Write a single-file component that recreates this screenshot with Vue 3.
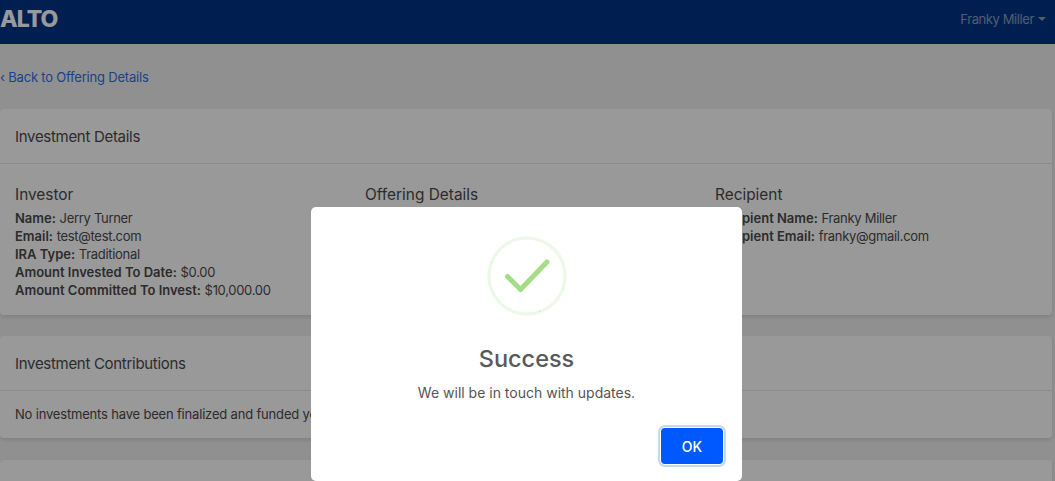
<script setup>
const columns = [
  {
    title: 'Investor',
    rows: [
      ['Name:', 'Jerry Turner'],
      ['Email:', 'test@test.com'],
      ['IRA Type:', 'Traditional'],
      ['Amount Invested To Date:', '$0.00'],
      ['Amount Committed To Invest:', '$10,000.00']
    ]
  },
  { title: 'Offering Details', rows: [] },
  {
    title: 'Recipient',
    rows: [
      ['Recipient Name:', 'Franky Miller'],
      ['Recipient Email:', 'franky@gmail.com']
    ]
  }
]
</script>

<template>
  <div class="page">
    <header class="navbar">
      <span class="logo">ALTO</span>
      <span class="user">Franky Miller<i class="caret"></i></span>
    </header>

    <main class="content">
      <a class="back" href="#">‹ Back to Offering Details</a>

      <section class="card">
        <h2 class="card-header">Investment Details</h2>
        <div class="details">
          <div v-for="col in columns" :key="col.title" class="col">
            <h3>{{ col.title }}</h3>
            <p v-for="row in col.rows" :key="row[0]"><b>{{ row[0] }}</b> <span>{{ row[1] }}</span></p>
          </div>
        </div>
      </section>

      <section class="card">
        <h2 class="card-header">Investment Contributions</h2>
        <p class="empty">No investments have been finalized and funded yet.</p>
      </section>

      <section class="card last"></section>
    </main>

    <div class="overlay">
      <div class="modal">
        <svg class="check" width="80" height="80" viewBox="0 0 80 80">
          <circle cx="40" cy="40" r="38" fill="none" stroke="#edf8e8" stroke-width="3.2" />
          <path d="M4 25.5 L5.5 27 M52 74 L53.5 76" fill="none" stroke="#c4e8b0" stroke-width="0.8" />
          <path d="M20.5 40.5 L33.5 53.5 L60 26" fill="none" stroke="#a5dc86" stroke-width="5" stroke-linecap="round" stroke-linejoin="round" />
        </svg>
        <h1>Success</h1>
        <p class="message">We will be in touch with updates.</p>
        <div class="actions">
          <button class="ok">OK</button>
        </div>
      </div>
    </div>
  </div>
</template>

<style>
html, body {
  margin: 0;
  height: 100%;
  overflow: hidden;
}
</style>

<style scoped>
.page {
  position: relative;
  height: 481px;
  overflow: hidden;
  background: #f0f1f0;
  font-family: Inter, "Liberation Sans", sans-serif;
  color: #4a4a4a;
}

.navbar {
  height: 44px;
  background: #003488;
  display: flex;
  align-items: center;
  justify-content: space-between;
  padding-bottom: 6px;
  box-sizing: border-box;
}

.logo {
  font-size: 23px;
  font-weight: 800;
  color: #fff;
  letter-spacing: -1px;
  line-height: 40px;
}

.user {
  font-size: 13px;
  letter-spacing: -0.4px;
  color: #8d9cb8;
  padding-right: 9px;
  display: flex;
  align-items: center;
}

.caret {
  width: 0;
  height: 0;
  margin-left: 4px;
  border-left: 4px solid transparent;
  border-right: 4px solid transparent;
  border-top: 4px solid #8d9cb8;
}

.content {
  width: 1052px;
  padding-top: 24px;
}

.back {
  display: block;
  height: 41px;
  font-size: 13px;
  letter-spacing: -0.2px;
  line-height: 18px;
  color: #2e6fe6;
  text-decoration: none;
}

.card {
  background: #fff;
  border-radius: 4px;
  box-shadow: 0 2px 4px rgba(0, 0, 0, 0.12);
  margin-bottom: 21px;
}

.card-header {
  margin: 0;
  height: 55px;
  box-sizing: border-box;
  padding: 0 15px;
  font-size: 15px;
  font-weight: 400;
  letter-spacing: -0.3px;
  line-height: 55px;
  border-bottom: 1px solid #e8e8e8;
}

.details {
  display: grid;
  grid-template-columns: repeat(3, 350px);
  padding: 21px 0 16px 15px;
}

.col h3 {
  margin: 0 0 4px;
  font-size: 15.4px;
  font-weight: 400;
  line-height: 20px;
}

.col p {
  margin: 0;
  font-size: 13px;
  line-height: 18px;
}

.col b {
  font-weight: 600;
}

.col span {
  letter-spacing: -0.3px;
}

.empty {
  margin: 0;
  padding: 14px 15px 15px;
  font-size: 13px;
  letter-spacing: -0.18px;
  line-height: 18px;
}

.last {
  height: 60px;
  margin-top: 22px;
  margin-bottom: 0;
}

.overlay {
  position: absolute;
  inset: 0;
  background: rgba(0, 0, 0, 0.4);
}

.modal {
  position: absolute;
  left: 311px;
  top: 207px;
  width: 431px;
  height: 274px;
  box-sizing: border-box;
  background: #fff;
  border-radius: 5px;
  display: flex;
  flex-direction: column;
  align-items: center;
  padding-top: 29px;
}

.check {
  display: block;
}

.modal h1 {
  margin: 28px 0 0;
  font-size: 23.5px;
  line-height: 30px;
  font-weight: 500;
  color: #595959;
}

.message {
  margin: 9px 0 0;
  font-size: 14px;
  line-height: 20px;
  color: #545454;
}

.actions {
  align-self: flex-end;
  margin: 25px 19px 0 0;
}

.ok {
  display: block;
  width: 62px;
  height: 36px;
  border: 0;
  border-radius: 4px;
  background: #0058ff;
  color: #fff;
  font: 500 14px Inter, "Liberation Sans", sans-serif;
  box-shadow: 0 0 0 1px #fff, 0 0 0 3px #c3d9ec;
}
</style>
